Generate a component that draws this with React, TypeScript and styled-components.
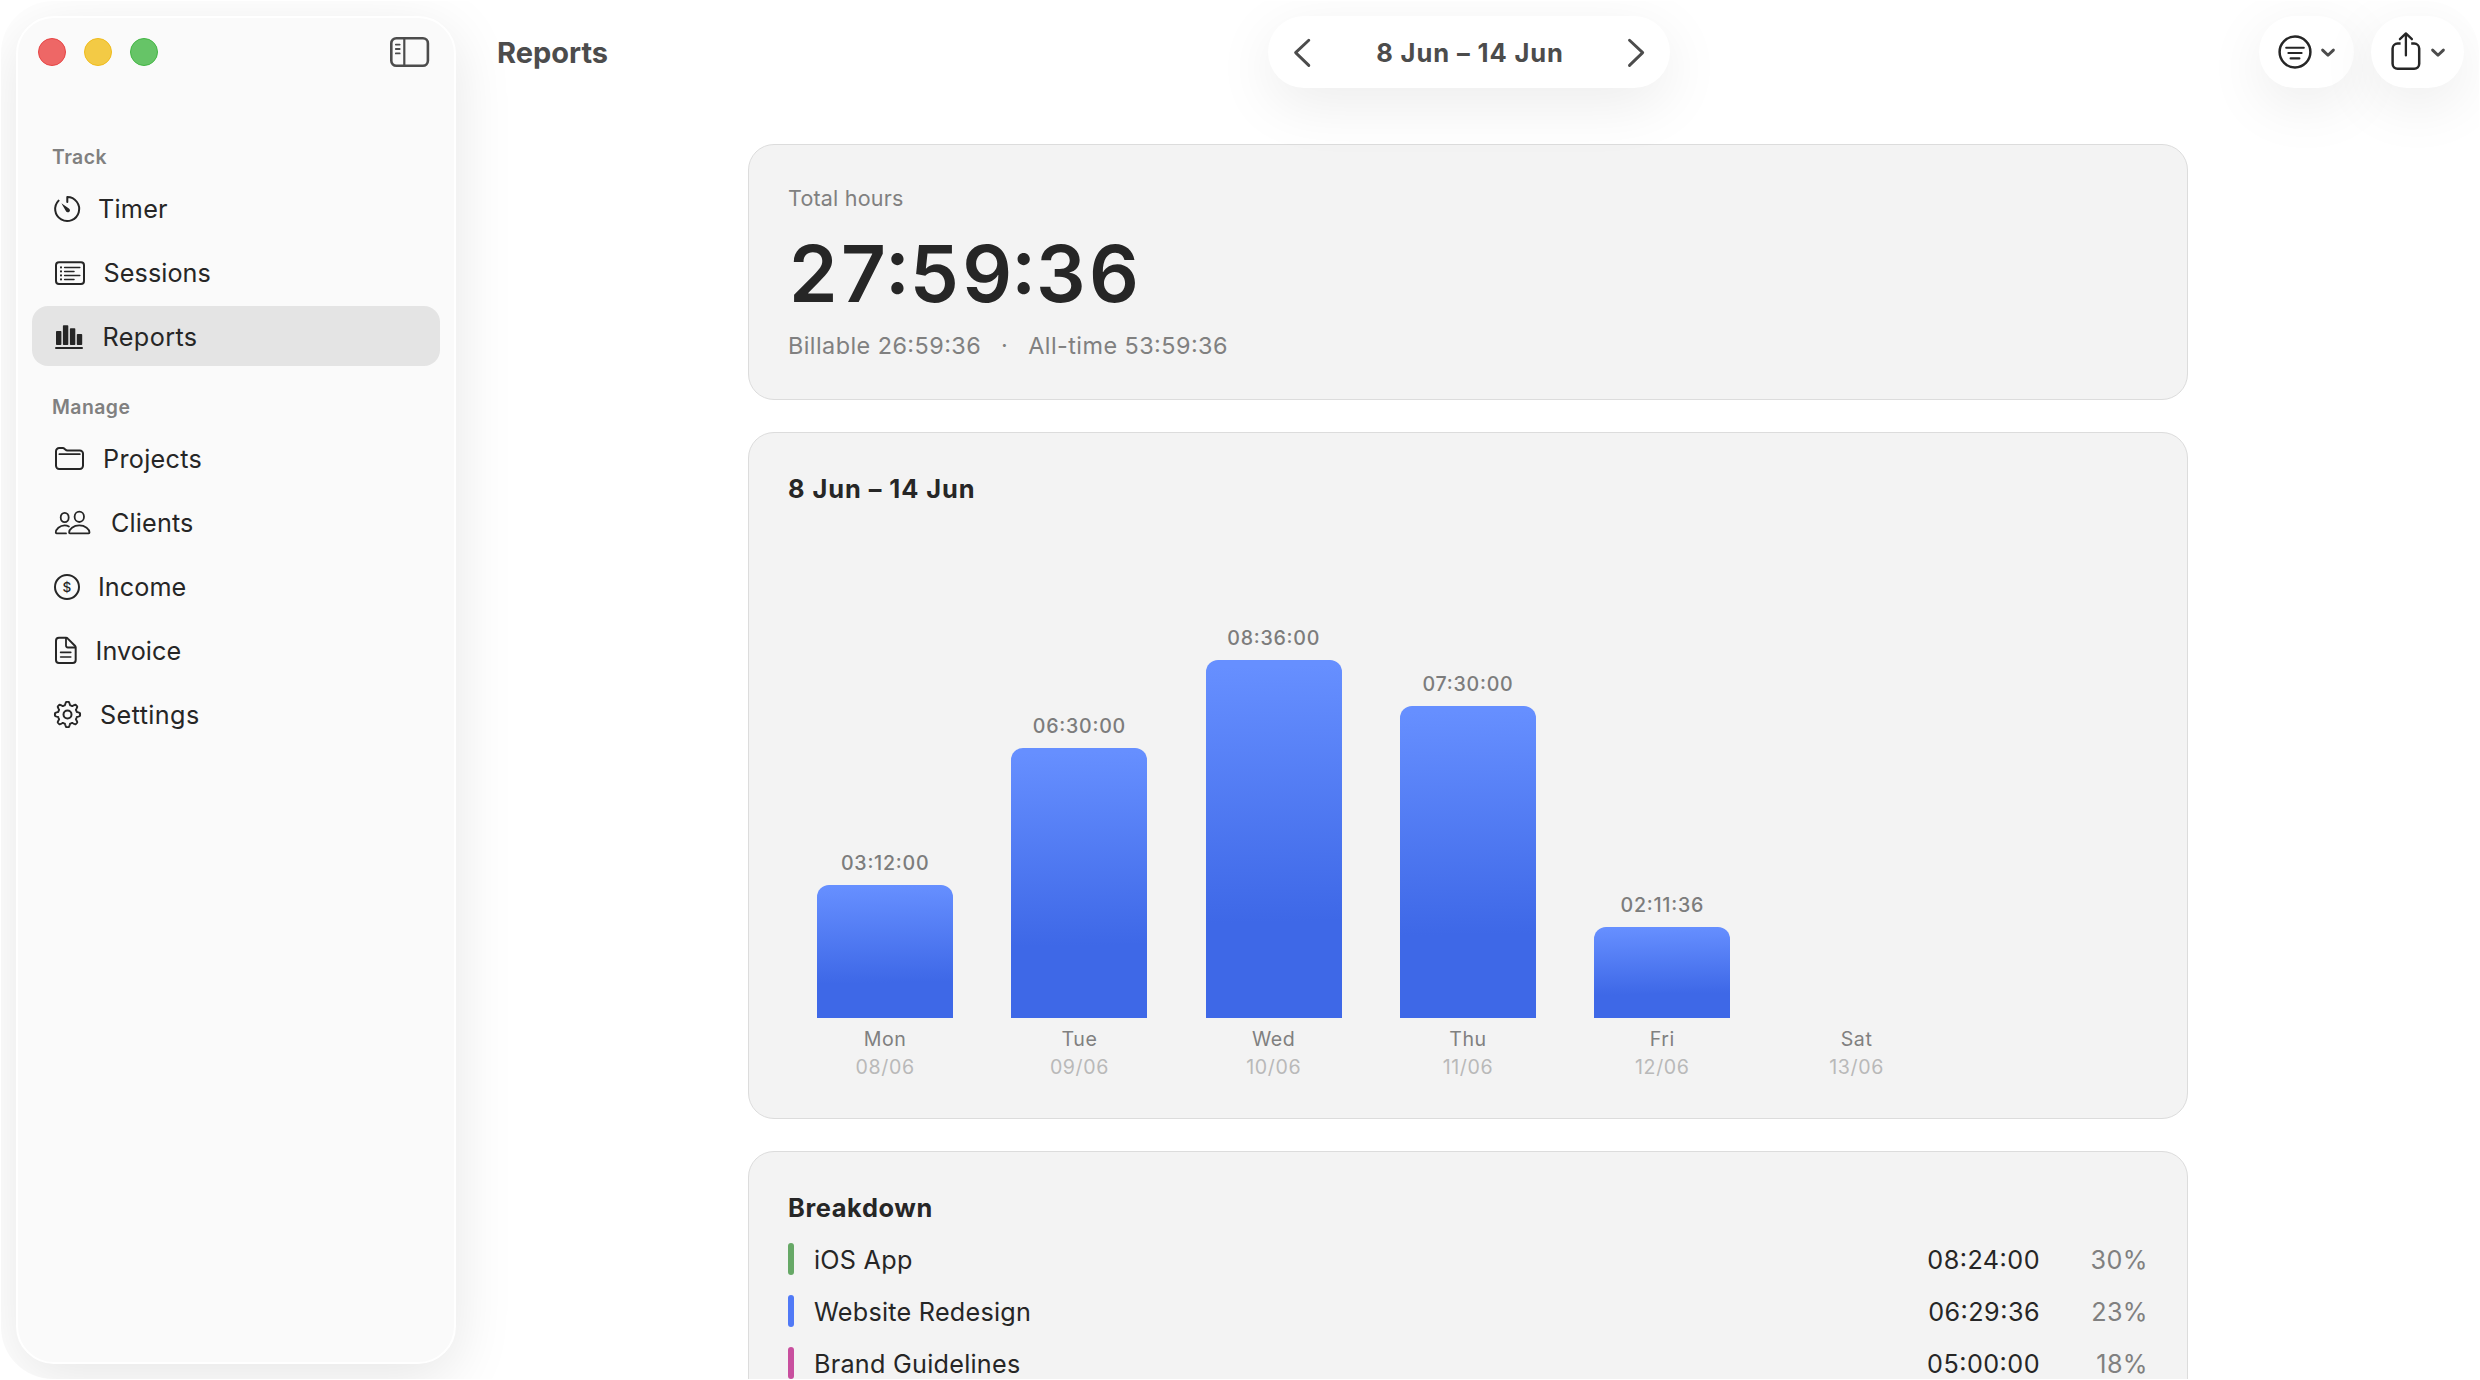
import React from 'react';
import styled, { createGlobalStyle } from 'styled-components';

const GlobalStyle = createGlobalStyle`
  *, *::before, *::after { box-sizing: border-box; }
  body {
    margin: 0;
    background: #ffffff;
    color: #262626;
    font-family: Inter, "Liberation Sans", sans-serif;
    overflow: hidden;
  }
`;

const Screen = styled.div`
  width: 2480px;
  height: 1380px;
  padding: 1px;
  background: #ffffff;
`;

const Window = styled.div`
  display: flex;
  width: 2478px;
  height: 1378px;
  border-radius: 52px;
  background: #ffffff;
  overflow: hidden;
`;

/* ---------- Sidebar ---------- */

const Sidebar = styled.aside`
  flex: none;
  width: 440px;
  height: 1348px;
  margin: 15px 0 15px 15px;
  padding: 0 14px;
  border: 2px solid #ffffff;
  border-radius: 38px;
  background: #fafafa;
  box-shadow: 0 14px 60px rgba(0, 0, 0, 0.1);
`;

const SidebarHeader = styled.div`
  display: flex;
  align-items: center;
  justify-content: space-between;
  height: 68px;
  padding: 0 10px 0 6px;
`;

const Lights = styled.div`
  display: flex;
  gap: 18px;
`;

const Light = styled.span<{ $fill: string; $edge: string }>`
  width: 28px;
  height: 28px;
  border-radius: 50%;
  border: 1px solid ${(p) => p.$edge};
  background: ${(p) => p.$fill};
`;

const SectionLabel = styled.div<{ $top: number }>`
  margin: ${(p) => p.$top}px 0 9px;
  padding-left: 20px;
  font-size: 19.4px;
  font-weight: 600;
  line-height: 24px;
  letter-spacing: 0.45px;
  color: #808080;
`;

const NavList = styled.nav`
  display: flex;
  flex-direction: column;
  gap: 4px;
`;

const NavItem = styled.a<{ $active?: boolean }>`
  display: flex;
  align-items: center;
  gap: 18px;
  height: 60px;
  padding-left: 22px;
  border-radius: 16px;
  background: ${(p) => (p.$active ? '#e4e4e4' : 'transparent')};
`;

const NavLabel = styled.span<{ $tracking: number }>`
  padding-top: 2px;
  font-size: 25.2px;
  line-height: 30px;
  letter-spacing: ${(p) => p.$tracking}px;
`;

const Icon = styled.svg<{ $stroke?: number }>`
  flex: none;
  display: block;
  overflow: visible;
  fill: none;
  stroke: currentColor;
  stroke-width: ${(p) => p.$stroke ?? 2};
  stroke-linecap: round;
  stroke-linejoin: round;
`;

/* ---------- Main area ---------- */

const Main = styled.main`
  flex: 1;
  min-width: 0;
  display: flex;
  flex-direction: column;
`;

const Toolbar = styled.header`
  position: relative;
  z-index: 1;
  display: grid;
  grid-template-columns: 772px 402px 1fr;
  align-items: center;
  flex: none;
  height: 87px;
  padding: 15px 15px 0 40px;
  color: #4c4c4c;
`;

const PageTitle = styled.h1`
  margin: 0;
  padding: 1px 0 0 1px;
  font-size: 29px;
  font-weight: 700;
  line-height: 35px;
`;

const Pill = styled.div`
  display: flex;
  align-items: center;
  height: 72px;
  border-radius: 36px;
  background: #ffffff;
  box-shadow: 0 16px 60px rgba(0, 0, 0, 0.08);
`;

const DatePill = styled(Pill)`
  justify-content: space-between;
  padding: 0 24px;
`;

const DateText = styled.span`
  padding: 1px 0 0 2px;
  font-size: 25.5px;
  font-weight: 700;
  line-height: 31px;
  letter-spacing: 0.9px;
`;

const Actions = styled.div`
  display: flex;
  justify-content: flex-end;
  gap: 17px;
`;

const ActionPill = styled(Pill)<{ $width: number; $pad: number; $gap: number }>`
  width: ${(p) => p.$width}px;
  padding-left: ${(p) => p.$pad}px;
  gap: ${(p) => p.$gap}px;
`;

const DarkIcon = styled(Icon)`
  color: #262626;
`;

const Content = styled.div`
  display: flex;
  flex-direction: column;
  gap: 32px;
  width: 1440px;
  margin: 56px 0 0 292px;
`;

const Card = styled.section`
  flex: none;
  padding: 40px 39px 39px;
  border: 1px solid #dcdcdc;
  border-radius: 26px;
  background: #f3f3f3;
`;

const Caption = styled.div`
  font-size: 21.5px;
  line-height: 26px;
  letter-spacing: 0.2px;
  color: #808080;
`;

/* Clock readings use the raised, digit-centred colon. */
const Clock = styled.span`
  font-feature-settings: "case" 1;
`;

const Total = styled.div`
  margin: 15px 0 10px 1px;
  font-size: 78px;
  font-weight: 600;
  line-height: 95px;
  font-feature-settings: "case" 1;
`;

const Digits = styled.span`
  margin-right: -4.4px;
  letter-spacing: 3.4px;
`;

const Summary = styled.div`
  display: flex;
  font-size: 23.4px;
  line-height: 29px;
  letter-spacing: 0.45px;
  color: #808080;
`;

const Dot = styled.span`
  width: 47px;
  text-align: center;
`;

const CardTitle = styled.h2<{ $tracking: number }>`
  margin: 0;
  font-size: 25.4px;
  font-weight: 700;
  line-height: 31px;
  letter-spacing: ${(p) => p.$tracking}px;
`;

/* ---------- Chart ---------- */

const Chart = styled.div`
  display: grid;
  grid-template-columns: repeat(7, 1fr);
`;

const Day = styled.div`
  display: flex;
  flex-direction: column;
  align-items: center;
  font-size: 19.6px;
  line-height: 24px;
  letter-spacing: 0.6px;
  color: #808080;
`;

const Plot = styled.div`
  display: flex;
  flex-direction: column;
  align-items: center;
  justify-content: flex-end;
  width: 70%;
  height: 514px;
`;

const BarValue = styled(Clock)`
  margin-bottom: 10px;
  font-weight: 500;
  letter-spacing: 0.75px;
  color: #7c7c7c;
`;

const Bar = styled.div`
  width: 100%;
  border-radius: 12px 12px 0 0;
  background: linear-gradient(179deg, #668fff 2%, #3e68e7 73%);
`;

const DayName = styled.span`
  height: 24px;
  margin: 9px 0 4px;
`;

const DayDate = styled.span`
  height: 24px;
  color: #b9b9b9;
`;

/* ---------- Breakdown ---------- */

const Rows = styled.div`
  margin-top: 10px;
`;

const BreakdownRow = styled.div`
  display: flex;
  align-items: center;
  height: 52px;
  font-size: 25.2px;
  line-height: 30px;
`;

const Swatch = styled.span<{ $color: string }>`
  width: 6px;
  height: 32px;
  margin-right: 20px;
  border-radius: 3px;
  background: ${(p) => p.$color};
`;

const Project = styled.span`
  flex: 1;
  padding-top: 2px;
  letter-spacing: 0.25px;
`;

const Time = styled(Clock)`
  padding-top: 2px;
  letter-spacing: 0.46px;
`;

const Percent = styled.span`
  width: 108px;
  padding-top: 2px;
  text-align: right;
  letter-spacing: 0.4px;
  color: #808080;
`;

/* ---------- Icons ---------- */

const TimerIcon = () => (
  <Icon width="26" height="32" viewBox="0 0 26 32">
    <path d="M13.3 10V5A12 12 0 1 1 4.6 8.6" />
    <path d="M7.4 11.2 14.9 16.4A2.1 2.1 0 1 1 12 19.2Z" fill="currentColor" stroke="none" />
  </Icon>
);

const SessionsIcon = () => (
  <Icon width="31.5" height="32" viewBox="0 0 31.5 32">
    <rect x="2" y="6.2" width="28" height="21.8" rx="3" />
    <path d="M7 11.4h.01M7 15.4h.01M7 19.4h.01M7 23.4h.01" strokeWidth="2.1" />
    <path d="M10.6 11.4h15.2M10.6 15.4h9.4M10.6 19.4h15.2M10.6 23.4h9.4" strokeWidth="1.5" />
  </Icon>
);

const ReportsIcon = () => (
  <Icon width="30.5" height="32" viewBox="0 0 30.5 32">
    <g fill="currentColor" stroke="none">
      <rect x="2" y="11" width="5.4" height="14" rx="0.8" />
      <rect x="8.9" y="5.3" width="5.4" height="19.7" rx="0.8" />
      <rect x="15.9" y="8.3" width="5.4" height="16.7" rx="0.8" />
      <rect x="22.8" y="14" width="5.4" height="11" rx="0.8" />
      <rect x="1" y="27" width="28" height="2" rx="1" />
    </g>
  </Icon>
);

const ProjectsIcon = () => (
  <Icon width="31" height="32" viewBox="0 0 31 32">
    <path d="M2 9.2a3.2 3.2 0 0 1 3.2-3.2h3.6c1.8 0 2.6 2.4 4.6 2.4h12.4a3.2 3.2 0 0 1 3.2 3.2v12.2a3.2 3.2 0 0 1-3.2 3.2H5.2A3.2 3.2 0 0 1 2 23.8z" />
    <path d="M5.4 12.2h20.4" strokeWidth="1.8" />
  </Icon>
);

const ClientsIcon = () => (
  <Icon width="39" height="32" viewBox="0 0 39 32" $stroke={1.8}>
    <ellipse cx="10.7" cy="11.5" rx="4" ry="4.7" />
    <ellipse cx="25.3" cy="10.8" rx="4.7" ry="5.2" />
    <path d="M12 27.4H2.6c-.5 0-.8-.3-.8-.8 0-3.4 3.9-7.2 8.9-7.2 1.6 0 3 .4 4.2 1.1" />
    <path d="M15.9 27.4c-.5 0-.8-.3-.8-.9 0-3.3 4.3-7.1 10.2-7.1s10.2 3.8 10.2 7.1c0 .6-.3.9-.8.9z" />
  </Icon>
);

const IncomeIcon = () => (
  <Icon width="26" height="32" viewBox="0 0 26 32">
    <circle cx="13" cy="17" r="12" />
    <text
      x="13"
      y="21.8"
      fontSize="13.6"
      fontWeight="500"
      textAnchor="middle"
      fill="currentColor"
      stroke="none"
    >
      $
    </text>
  </Icon>
);

const InvoiceIcon = () => (
  <Icon width="23.6" height="32" viewBox="0 0 23.6 32">
    <path d="M5 3.8h7c.7 0 1.3.2 1.8.8l7.1 7.2c.6.6.8 1.2.8 1.9v12.3a3 3 0 0 1-3 3H5a3 3 0 0 1-3-3V6.8a3 3 0 0 1 3-3z" />
    <path d="M12 4.2v7.4c0 1.2.7 1.9 1.9 1.9h7.4" strokeWidth="1.8" />
    <path d="M6.6 18.4h10.2M6.6 23h10.2" strokeWidth="1.6" />
  </Icon>
);

const gearPath = (() => {
  const steps = 192;
  const points: string[] = [];
  for (let i = 0; i < steps; i += 1) {
    const a = (i / steps) * Math.PI * 2;
    const wave = Math.max(-1, Math.min(1, 1.7 * Math.cos(8 * a) - 0.1));
    const r = 11.1 + 1.5 * wave;
    points.push(`${(13.5 + r * Math.sin(a)).toFixed(2)} ${(16.5 - r * Math.cos(a)).toFixed(2)}`);
  }
  return `M${points.join('L')}Z`;
})();

const SettingsIcon = () => (
  <Icon width="28" height="32" viewBox="0 0 28 32">
    <path d={gearPath} strokeWidth="1.9" />
    <circle cx="13.5" cy="16.5" r="4" />
  </Icon>
);

const SidebarIcon = () => (
  <Icon width="40" height="32" viewBox="0 0 40 32" color="#4c4c4c" $stroke={2.6}>
    <rect x="1.3" y="2.2" width="36.6" height="27.6" rx="5" />
    <path d="M14.3 2.2v27.6" strokeWidth="2.2" />
    <path d="M5.8 8.6h3.9M5.8 13h3.9M5.8 17.4h3.9" strokeWidth="1.8" />
  </Icon>
);

const ChevronLeft = () => (
  <Icon width="20" height="32" viewBox="0 0 20 32" $stroke={2.9}>
    <path d="M16.8 4.2 3.6 16.6 16.8 29.4" />
  </Icon>
);

const ChevronRight = () => (
  <Icon width="20" height="32" viewBox="0 0 20 32" $stroke={2.9}>
    <path d="M3.5 4.2 16.7 16.6 3.5 29.4" />
  </Icon>
);

const ChevronDown = () => (
  <Icon width="14" height="12" viewBox="0 0 14 12" $stroke={2.9}>
    <path d="M1.6 4.1 7 9.3 12.4 4.1" />
  </Icon>
);

const FilterIcon = () => (
  <DarkIcon width="34" height="34" viewBox="0 0 34 34" $stroke={2.5}>
    <circle cx="17" cy="17" r="15.4" />
    <path d="M8.2 12.7h17.6M10.4 18h13.2M12.6 23.4h8.8" strokeWidth="2.1" />
  </DarkIcon>
);

const ShareIcon = () => (
  <DarkIcon width="30" height="40" viewBox="0 0 30 40" $stroke={2.5}>
    <path
      d="M9.6 11.6H6.6a5 5 0 0 0-5 5v15.2a5 5 0 0 0 5 5h16.6a5 5 0 0 0 5-5V16.6a5 5 0 0 0-5-5h-3"
      strokeLinecap="butt"
    />
    <path d="M14.9 23.4V1.8M8.9 7.2l6-5.8 6 5.8" strokeWidth="2.3" />
  </DarkIcon>
);

/* ---------- Data ---------- */

type Nav = { label: string; tracking: number; icon: React.ReactNode; active?: boolean };

const track: Nav[] = [
  { label: 'Timer', tracking: 0.25, icon: <TimerIcon /> },
  { label: 'Sessions', tracking: 0.08, icon: <SessionsIcon /> },
  { label: 'Reports', tracking: 0.4, icon: <ReportsIcon />, active: true },
];

const manage: Nav[] = [
  { label: 'Projects', tracking: 0.3, icon: <ProjectsIcon /> },
  { label: 'Clients', tracking: 0.15, icon: <ClientsIcon /> },
  { label: 'Income', tracking: 0.08, icon: <IncomeIcon /> },
  { label: 'Invoice', tracking: 0.05, icon: <InvoiceIcon /> },
  { label: 'Settings', tracking: 0.4, icon: <SettingsIcon /> },
];

const days = [
  { name: 'Mon', date: '08/06', value: '03:12:00', height: 133 },
  { name: 'Tue', date: '09/06', value: '06:30:00', height: 270 },
  { name: 'Wed', date: '10/06', value: '08:36:00', height: 358 },
  { name: 'Thu', date: '11/06', value: '07:30:00', height: 312 },
  { name: 'Fri', date: '12/06', value: '02:11:36', height: 91 },
  { name: 'Sat', date: '13/06', value: '', height: 0 },
  { name: '', date: '', value: '', height: 0 },
];

const projects = [
  { name: 'iOS App', time: '08:24:00', share: '30%', color: '#66a866' },
  { name: 'Website Redesign', time: '06:29:36', share: '23%', color: '#5079f6' },
  { name: 'Brand Guidelines', time: '05:00:00', share: '18%', color: '#c84f9e' },
];

const renderNav = (items: Nav[]) => (
  <NavList>
    {items.map((item) => (
      <NavItem key={item.label} $active={item.active}>
        {item.icon}
        <NavLabel $tracking={item.tracking}>{item.label}</NavLabel>
      </NavItem>
    ))}
  </NavList>
);

export default function App() {
  return (
    <Screen>
      <GlobalStyle />
      <Window>
        <Sidebar>
          <SidebarHeader>
            <Lights>
              <Light $fill="#ee6766" $edge="#e64545" />
              <Light $fill="#f3ca45" $edge="#efbb1c" />
              <Light $fill="#66c467" $edge="#43b644" />
            </Lights>
            <SidebarIcon />
          </SidebarHeader>
          <SectionLabel $top={59}>Track</SectionLabel>
          {renderNav(track)}
          <SectionLabel $top={29}>Manage</SectionLabel>
          {renderNav(manage)}
        </Sidebar>
        <Main>
          <Toolbar>
            <PageTitle>Reports</PageTitle>
            <DatePill>
              <ChevronLeft />
              <DateText>8 Jun – 14 Jun</DateText>
              <ChevronRight />
            </DatePill>
            <Actions>
              <ActionPill $width={95} $pad={19} $gap={9}>
                <FilterIcon />
                <ChevronDown />
              </ActionPill>
              <ActionPill $width={93} $pad={20} $gap={10}>
                <ShareIcon />
                <ChevronDown />
              </ActionPill>
            </Actions>
          </Toolbar>
          <Content>
            <Card>
              <Caption>Total hours</Caption>
              <Total>
                <Digits>27</Digits>:<Digits>59</Digits>:<Digits>36</Digits>
              </Total>
              <Summary>
                <span>
                  Billable <Clock>26:59:36</Clock>
                </span>
                <Dot>·</Dot>
                <span>
                  All-time <Clock>53:59:36</Clock>
                </span>
              </Summary>
            </Card>
            <Card>
              <CardTitle $tracking={0.95}>8 Jun – 14 Jun</CardTitle>
              <Chart>
                {days.map((day, i) => (
                  <Day key={i}>
                    <Plot>
                      {day.height > 0 && (
                        <>
                          <BarValue>{day.value}</BarValue>
                          <Bar style={{ height: day.height }} />
                        </>
                      )}
                    </Plot>
                    <DayName>{day.name}</DayName>
                    <DayDate>{day.date}</DayDate>
                  </Day>
                ))}
              </Chart>
            </Card>
            <Card>
              <CardTitle $tracking={0.62}>Breakdown</CardTitle>
              <Rows>
                {projects.map((p) => (
                  <BreakdownRow key={p.name}>
                    <Swatch $color={p.color} />
                    <Project>{p.name}</Project>
                    <Time>{p.time}</Time>
                    <Percent>{p.share}</Percent>
                  </BreakdownRow>
                ))}
              </Rows>
            </Card>
          </Content>
        </Main>
      </Window>
    </Screen>
  );
}
